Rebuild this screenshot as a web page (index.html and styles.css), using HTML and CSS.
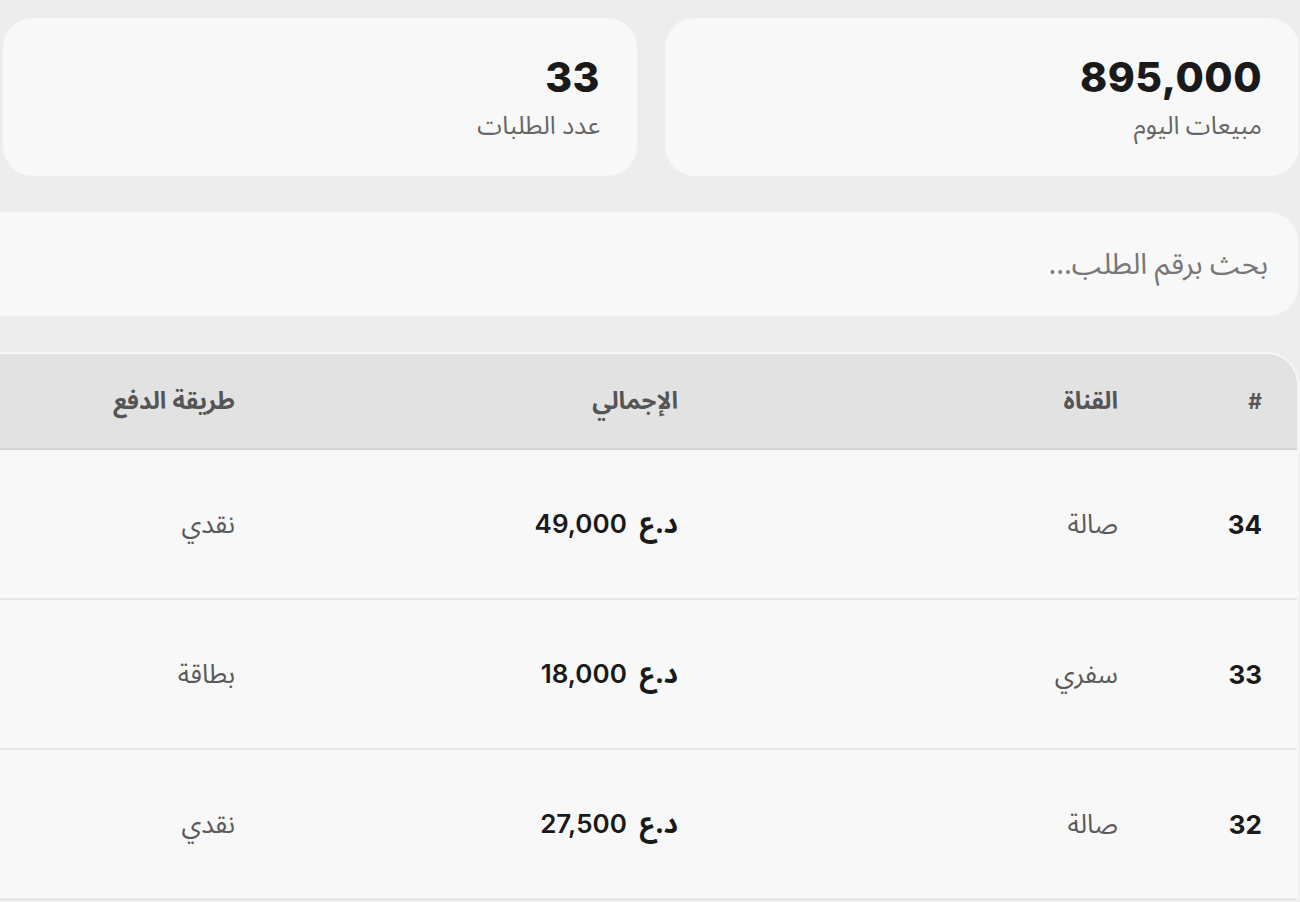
FILE: index.html
```html
<!DOCTYPE html>
<html lang="ar" dir="rtl">
<head>
<meta charset="utf-8">
<title>لوحة الطلبات</title>
<link rel="stylesheet" href="styles.css">
</head>
<body>
<div class="page">
  <section class="stats">
    <div class="stat-card">
      <div class="stat-value">895,000</div>
      <div class="stat-label">مبيعات اليوم</div>
    </div>
    <div class="stat-card">
      <div class="stat-value">33</div>
      <div class="stat-label">عدد الطلبات</div>
    </div>
  </section>

  <div class="search">
    <input class="search-input" type="text" placeholder="بحث برقم الطلب...">
  </div>

  <div class="table-wrap">
    <table class="orders">
      <thead>
        <tr>
          <th class="col-num">#</th>
          <th class="col-channel">القناة</th>
          <th class="col-total">الإجمالي</th>
          <th class="col-pay">طريقة الدفع</th>
        </tr>
      </thead>
      <tbody>
        <tr>
          <td class="num">34</td>
          <td class="muted">صالة</td>
          <td class="amount"><span class="currency">د.ع</span> <span class="amount-num">49,000</span></td>
          <td class="muted">نقدي</td>
        </tr>
        <tr>
          <td class="num">33</td>
          <td class="muted">سفري</td>
          <td class="amount"><span class="currency">د.ع</span> <span class="amount-num">18,000</span></td>
          <td class="muted">بطاقة</td>
        </tr>
        <tr>
          <td class="num">32</td>
          <td class="muted">صالة</td>
          <td class="amount"><span class="currency">د.ع</span> <span class="amount-num">27,500</span></td>
          <td class="muted">نقدي</td>
        </tr>
      </tbody>
    </table>
  </div>
</div>
</body>
</html>
```

FILE: styles.css
```css
html, body {
  margin: 0;
  padding: 0;
  background: #ededed;
  overflow: hidden;
}

body {
  font-family: "Noto Sans Arabic", Inter, "DejaVu Sans", sans-serif;
  color: #1a1a1a;
  direction: rtl;
}

.page {
  padding: 18px 1px 0 0;
}

.stats {
  display: grid;
  grid-template-columns: 1fr 1fr;
  gap: 28px;
  margin-left: 3px;
}

.stat-card {
  background: #f8f8f8;
  border-radius: 30px;
  height: 158px;
  box-sizing: border-box;
  padding: 37px 37px 0 37px;
}

.stat-value {
  font-family: Inter, sans-serif;
  font-weight: 800;
  font-size: 41px;
  line-height: 44px;
  color: #1a1a1a;
  letter-spacing: 0.5px;
}

.stat-label {
  font-size: 25px;
  line-height: 34px;
  color: #666;
  margin-top: 10px;
}

.search {
  margin-top: 36px;
  margin-left: -40px;
  margin-right: 1px;
  height: 104px;
  background: #f8f8f8;
  border-radius: 30px;
  display: flex;
  align-items: center;
  padding: 0 30px;
}

.search-input {
  flex: 1;
  border: 0;
  outline: 0;
  background: transparent;
  font-family: inherit;
  font-size: 29px;
  color: #333;
  direction: rtl;
  padding: 0;
}

.search-input::placeholder {
  color: #777;
}

.table-wrap {
  margin-top: 36px;
  margin-left: -40px;
  background: #f8f8f8;
  border: 2px solid #f6f6f6;
  border-bottom: 0;
  border-radius: 32px 32px 0 0;
  overflow: hidden;
}

.orders {
  width: 100%;
  border-collapse: collapse;
  table-layout: fixed;
}

.orders th {
  background: #e2e2e2;
  height: 94px;
  border-bottom: 2px solid #d6d6d6;
  text-align: right;
  font-weight: 700;
  font-size: 24px;
  color: #555;
  padding: 0 35px;
}

.orders td {
  height: 148px;
  border-bottom: 2px solid #e6e6e6;
  text-align: right;
  padding: 0 35px;
  font-size: 26px;
}

.col-num { width: 74px; }
.col-channel { width: 370px; }
.col-total { width: 373px; }

.orders th.col-num {
  font-family: Inter, sans-serif;
  font-size: 21px;
}

.num {
  font-family: Inter, sans-serif;
  font-weight: 700;
  font-size: 26px;
  color: #1a1a1a;
}

.muted {
  color: #5a5a5a;
}

.amount {
  font-weight: 600;
  color: #1a1a1a;
  word-spacing: 6px;
}

.currency {
  font-weight: 700;
  font-size: 28px;
}

.amount-num {
  font-family: Inter, sans-serif;
  font-weight: 600;
  letter-spacing: 0.8px;
}
```
